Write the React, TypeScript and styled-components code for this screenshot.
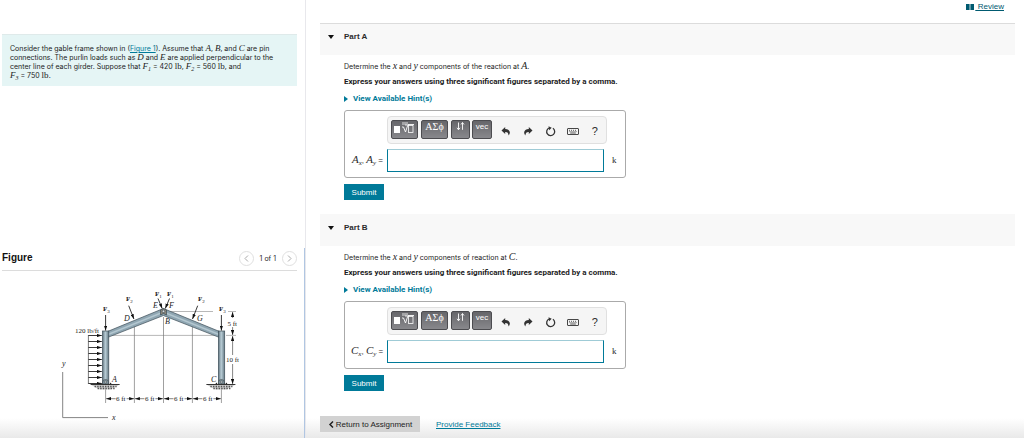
import React from 'react';
import styled, { createGlobalStyle } from 'styled-components';

const teal = '#007a99';

const GlobalStyle = createGlobalStyle`
  *, *::before, *::after { box-sizing: border-box; }
  body {
    margin: 0;
    background: #fff;
    color: #2b2b2b;
    font-family: "Liberation Sans", Arial, sans-serif;
    font-size: 8px;
    line-height: 9px;
  }
  button, input { font: inherit; color: inherit; margin: 0; padding: 0; }
`;

const Page = styled.div`
  display: grid;
  grid-template-columns: 306fr 718fr;
  min-height: 100vh;
  background: linear-gradient(to top, #e9e9e9, rgba(255, 255, 255, 0)) bottom / 100% 20px no-repeat;
`;

const Sidebar = styled.aside`
  display: flex;
  flex-direction: column;
  border-right: 1px solid #e8e8ec;
`;

const ProblemPane = styled.section`
  min-height: 248px;
  padding: 34px 8px 0 2px;
`;

const ProblemText = styled.p`
  margin: 0;
  padding: 9px 8px 6px;
  background: #e5f5f5;
  border-top: 1px solid #dfeaea;
  color: #1c1c1c;
  font-family: Inter, Arial, sans-serif;
  font-size: 7px;
`;

const Anchor = styled.a`
  color: ${teal};
  text-decoration: underline;
`;

const Var = styled.i`
  font-family: "Liberation Serif", serif;
  font-size: 9px;
  line-height: 1px;

  sub {
    font-size: 6px;
    line-height: 1px;
    vertical-align: -2px;
  }
`;

const Serif = styled.span`
  font-family: "Liberation Serif", serif;
  font-size: 9px;
  line-height: 1px;
`;

const FigurePane = styled.section`
  flex: 1;
  padding: 2px 7px 0 2px;
  border-right: 1px solid #b0c6e2;
`;

const FigureHeader = styled.header`
  display: flex;
  align-items: center;
  justify-content: space-between;
  height: 21px;
  border-bottom: 1px solid #dcdcdc;
`;

const FigureTitle = styled.h2`
  margin: 0 0 5px;
  font-size: 10px;
  line-height: 12px;
  color: #111;
`;

const Pager = styled.nav`
  display: flex;
  align-items: center;
  gap: 6px;
  padding-bottom: 4px;
  font-family: Inter, Arial, sans-serif;
  font-size: 7px;
`;

const RoundButton = styled.button`
  display: grid;
  place-items: center;
  width: 15px;
  height: 15px;
  border: 1px solid #e0e0e0;
  border-radius: 50%;
  background: #fff;
`;

const Diagram = styled.svg`
  display: block;
  width: 200px;
  height: 144px;
  margin: 13px 0 0 48px;
  font-family: "Liberation Serif", serif;
  font-size: 7px;
  fill: #222;
`;

const Main = styled.main`
  padding: 0 9px 6px 14px;
`;

const ReviewBar = styled.div`
  display: flex;
  justify-content: flex-end;
  height: 23px;
  padding: 2px 11px 0 0;
`;

const ReviewLink = styled.a`
  display: flex;
  align-items: center;
  gap: 2px;
  height: 9px;
  color: #005a70;
  white-space: pre;
`;

const PartSection = styled.section`
  margin-bottom: 14px;
`;

const PartHeader = styled.header<{ $ruled: boolean }>`
  display: flex;
  gap: 10px;
  height: 32px;
  padding: ${p => (p.$ruled ? '7px' : '8px')} 8px 0;
  background: #f8f8f8;
  border-top: ${p => (p.$ruled ? '1px solid #dcdcdc' : '0')};
`;

const Caret = styled.svg`
  width: 6px;
  height: 4px;
  margin-top: 4px;
`;

const PartTitle = styled.h3`
  margin: 0;
  font-size: 8px;
  line-height: 11px;
`;

const PartBody = styled.div`
  padding: 7px 24px 0;
`;

const Line = styled.p<{ $bold?: boolean }>`
  margin: 0 0 6px;
  font-family: ${p => (p.$bold ? 'Roboto' : 'Inter')}, Arial, sans-serif;
  font-size: ${p => (p.$bold ? 8 : 7)}px;
  font-weight: ${p => (p.$bold ? 700 : 400)};
  color: #1c1c1c;

  ${Var} { font-size: 10px; }
`;

const HintButton = styled.button`
  display: flex;
  align-items: center;
  gap: 5px;
  margin: 8px 0 7px;
  border: 0;
  background: none;
  color: ${teal};
  font-family: Roboto, Arial, sans-serif;
  font-weight: 700;
`;

const AnswerBox = styled.div`
  display: grid;
  grid-template-columns: 32px 217px auto;
  column-gap: 4px;
  row-gap: 5px;
  align-items: center;
  width: 282px;
  max-width: 100%;
  height: 68px;
  padding: 5px 6px;
  border: 1px solid #aaa;
  border-radius: 3px;
`;

const Toolbar = styled.div`
  grid-column: 2 / 4;
  display: flex;
  width: 220px;
  height: 28px;
  padding: 3px 0 3px 3px;
  border: 1px solid #e0e0e0;
  border-radius: 4px;
  background: #f5f5f5;
`;

const ToolButton = styled.button<{ $w: number }>`
  display: flex;
  flex: none;
  justify-content: center;
  width: ${p => p.$w}px;
  height: 19px;
  margin-right: ${p => (p.$w > 19 ? 3 : 2)}px;
  border: 1px solid #4c4c50;
  border-radius: 2px;
  background: linear-gradient(#66666a, #88888c);
  color: #fff;
  line-height: 11px;
`;

const Greek = styled.span`
  font-family: "Liberation Serif", serif;
  font-size: 10px;
  line-height: 12px;
`;

const IconButton = styled.button`
  display: grid;
  flex: 1;
  place-items: center;
  height: 22px;
  border: 0;
  background: none;
  font-size: 11px;
`;

const AnswerLabel = styled.label`
  text-align: right;
  white-space: nowrap;

  ${Var} { font-size: 11px; }
  sub { font-size: 7px; }
`;

const AnswerInput = styled.input`
  width: 100%;
  height: 23px;
  padding: 0 4px;
  border: 1px solid ${teal};
  border-top-color: #9fcbd6;
  background: #fff;
  outline: 0;
`;

const Unit = styled(Serif)`
  padding-left: 4px;
`;

const SubmitButton = styled.button`
  display: block;
  width: 40px;
  height: 16px;
  margin-top: 6px;
  border: 0;
  background: ${teal};
  color: #fff;
`;

const FooterBar = styled.footer`
  display: flex;
  align-items: center;
  gap: 16px;
  margin-top: 25px;
`;

const ReturnButton = styled.button`
  display: flex;
  align-items: center;
  justify-content: center;
  gap: 1px;
  width: 100px;
  height: 16px;
  border: 0;
  background: #d2d2d2;
  color: #222;
`;

function Chevron({ left, color, size = 7, weight = 1 }: { left?: boolean; color: string; size?: number; weight?: number }) {
  return (
    <svg width={size} height={size} viewBox="0 0 7 7" fill="none" stroke={color} strokeWidth={weight} aria-hidden="true">
      <path d={left ? 'M5 .5 2 3.5l3 3' : 'M2 .5l3 3-3 3'} />
    </svg>
  );
}

function Force({ x, y, n }: { x: number; y: number; n: number }) {
  return (
    <text x={x} y={y} fontWeight="700">
      F<tspan fontSize="5" dy="1.5" fontWeight="400">{n}</tspan>
    </text>
  );
}

function Ground({ x }: { x: number }) {
  return (
    <g>
      <path d={`M${x - 15} 384.5h29l-5 3-4 2h-11l-4-2z`} fill="#ccc" />
      <path d={`M${x - 15} 384.5h29`} stroke="#333" strokeWidth="1" />
      <path
        d={`M${x - 11} 386.5h22M${x - 8} 388.5h17`}
        stroke="#555"
        strokeWidth="1.3"
        strokeDasharray="1.4 1.2"
      />
      <path d={`M${x - 3} 384v-1.5a3 3 0 0 1 6 0V384z`} fill="#7f95a0" stroke="#333" strokeWidth=".5" />
      <circle cx={x} cy="382" r="1" fill="#dde7eb" stroke="#333" strokeWidth=".5" />
      <path d={`M${x - 6} 384l1-1.6 1 1.6zM${x + 4} 384l1-1.6 1 1.6z`} />
    </g>
  );
}

function FrameDiagram() {
  const loads = [335.5, 341.5, 347.5, 353.5, 359.5, 365.5, 371.5, 377.5, 383.5];
  return (
    <Diagram viewBox="50 284 200 144" role="img" aria-label="Gable frame with applied loads and dimensions">
      <defs>
        <marker id="tip" viewBox="0 0 6 4" refX="6" refY="2" markerWidth="5" markerHeight="3.6" markerUnits="userSpaceOnUse" orient="auto-start-reverse">
          <path d="M0 0l6 2-6 2z" fill="#111" />
        </marker>
        <linearGradient id="column">
          <stop offset="0" stopColor="#60737e" />
          <stop offset=".45" stopColor="#b9cdd6" />
          <stop offset="1" stopColor="#667b86" />
        </linearGradient>
      </defs>

      <g stroke="#999" strokeWidth=".7" fill="none">
        <path d="M109 335.4H218M226 335.4h10M167 311.5h46M228 311.5h8" />
        <path d="M134.4 322v81M163.5 317v86M192.4 322v81M105.6 389v14M221.4 389v14" stroke="#777" />
        <path d="M62.7 372v45.6H108" stroke="#777" strokeWidth=".9" />
      </g>

      <g stroke="#3d4e58" strokeWidth=".7">
        <path d="M108 331.3 163.4 308.5 219 331.3V337.3L163.4 315.5 108 337.3z" fill="#8fa6b2" />
        <path d="M108 334.5 163.4 312 219 334.5" fill="none" stroke="#b4c7d0" strokeWidth="1.4" />
        <rect x="102.5" y="331" width="6.3" height="53" fill="url(#column)" />
        <rect x="218.4" y="331" width="6.3" height="53" fill="url(#column)" />
        <path d="M160.5 310v5l3-1.5 3 1.5v-5l-3-1.5z" fill="#8a8478" />
        <circle cx="163.5" cy="311.3" r="1.3" fill="#ddd" />
      </g>

      <g stroke="#222" strokeWidth=".9" fill="none">
        {loads.map(y => (
          <path key={y} d={`M88.4 ${y}h13.4`} markerEnd="url(#tip)" />
        ))}
        <path d="M88.4 335v49" strokeWidth=".6" />
        <path d="M105.6 315v15.5" markerEnd="url(#tip)" />
        <path d="M221.4 315v15.5" markerEnd="url(#tip)" />
        <path d="M128.7 305.7l5.2 13.3" markerEnd="url(#tip)" />
        <path d="M197.7 305.7l-5.2 13.3" markerEnd="url(#tip)" />
        <path d="M158 298.5l4.2 10" markerEnd="url(#tip)" />
        <path d="M169.5 298.5l-4.2 10" markerEnd="url(#tip)" />
      </g>

      <g stroke="#333" strokeWidth=".6" fill="none">
        <path d="M232.6 318v-6" markerEnd="url(#tip)" />
        <path d="M232.6 327v8" markerEnd="url(#tip)" />
        <path d="M232.6 355v-19" markerEnd="url(#tip)" />
        <path d="M232.6 364v20" markerEnd="url(#tip)" />
        {[105.6, 134.4, 163.5, 192.4].map(x => (
          <g key={x}>
            <path d={`M${x + 10} 398.7H${x + 0.5}`} markerEnd="url(#tip)" />
            <path d={`M${x + 21} 398.7h7.5`} markerEnd="url(#tip)" />
          </g>
        ))}
      </g>

      <Ground x={105.6} />
      <Ground x={221.4} />

      <Force x={103} y={311} n={3} />
      <Force x={126} y={301} n={2} />
      <Force x={155} y={296} n={1} />
      <Force x={167} y={296} n={1} />
      <Force x={198} y={301} n={2} />
      <Force x={219} y={311} n={3} />
      <g fontStyle="italic" fontSize="8">
        <text x="124" y="321">D</text>
        <text x="153" y="308">E</text>
        <text x="169" y="308">F</text>
        <text x="165" y="324">B</text>
        <text x="197" y="321">G</text>
        <text x="112" y="382">A</text>
        <text x="211" y="382">C</text>
        <text x="62" y="366">y</text>
        <text x="112" y="420">x</text>
      </g>
      <text x="75" y="332.5">120 lb/ft</text>
      <text x="227.5" y="325.5">5 ft</text>
      <text x="226" y="362">10 ft</text>
      {[116, 145, 174, 203].map(x => (
        <text key={x} x={x} y="401">6 ft</text>
      ))}
    </Diagram>
  );
}

function FormulaIcon() {
  return (
    <svg width="21" height="15" viewBox="0 0 21 15" fill="none" stroke="#fff" aria-hidden="true">
      <rect x="0" y="5" width="6" height="7" fill="#fff" stroke="none" />
      <path d="M8 6h1.500l2 5L14 3.500h6" strokeWidth=".9" />
      <rect x="14.500" y="4.500" width="4.500" height="7" strokeWidth=".8" />
      <path d="M9 1v3M11 1v3h2V1" strokeWidth=".8" />
    </svg>
  );
}

function ArrowsIcon() {
  return (
    <svg width="9" height="10" viewBox="0 0 9 10" fill="none" stroke="#fff" strokeWidth=".9" aria-hidden="true">
      <path d="M2.5 1.5v7M1 6.8l1.5 2L4 6.8M6.5 8.8v-7M5 3.5l1.5-2 1.5 2" />
    </svg>
  );
}

function BentArrow({ flip }: { flip?: boolean }) {
  return (
    <svg width="10" height="9" viewBox="0 0 10 9" fill="#333" aria-hidden="true">
      <path
        d="M4.200 0 .5 3.500l3.700 3.500V5c2.200-.1 3.200 1 3.400 3.600C10.400 5.200 8.200 2.200 4.200 2.100z"
        transform={flip ? 'matrix(-1 0 0 1 10 0)' : undefined}
      />
    </svg>
  );
}

function ResetIcon() {
  return (
    <svg width="11" height="11" viewBox="0 0 11 11" fill="none" stroke="#333" strokeWidth="1.3" aria-hidden="true">
      <path d="M7.900 2.300A4 4 0 1 1 4 2" />
      <path d="M3.500 .2 6.700 1.800 4.200 4.200z" fill="#333" stroke="none" />
    </svg>
  );
}

function KeyboardIcon() {
  return (
    <svg width="12" height="8" viewBox="0 0 12 8" fill="none" stroke="#333" aria-hidden="true">
      <rect x=".5" y="1.500" width="11" height="6" rx=".5" strokeWidth=".9" />
      <path d="M2 3.300h8M2.500 4.600h7" strokeDasharray="1 1" strokeWidth=".8" />
      <path d="M3.200 6h5.600" strokeWidth=".8" />
    </svg>
  );
}

function Part({ letter, ruled, article, variable }: { letter: string; ruled: boolean; article: string; variable: string }) {
  const inputId = `answer-${letter}`;
  return (
    <PartSection>
      <PartHeader $ruled={ruled}>
        <Caret viewBox="0 0 6 4" aria-hidden="true"><path d="M0 0h6L3 4z" fill="#111" /></Caret>
        <PartTitle>Part {letter}</PartTitle>
      </PartHeader>
      <PartBody>
        <Line>
          Determine the <Var>x</Var> and <Var>y</Var> components of {article}reaction at <Var>{variable}</Var>.
        </Line>
        <Line $bold>Express your answers using three significant figures separated by a comma.</Line>
        <HintButton type="button">
          <svg width="4" height="6" viewBox="0 0 4 6" aria-hidden="true"><path d="M0 0l4 3-4 3z" fill={teal} /></svg>
          View Available Hint(s)
        </HintButton>
        <AnswerBox>
          <Toolbar role="toolbar" aria-label="Equation tools">
            <ToolButton type="button" $w={27} aria-label="Templates"><FormulaIcon /></ToolButton>
            <ToolButton type="button" $w={27} aria-label="Symbols"><Greek>ΑΣϕ</Greek></ToolButton>
            <ToolButton type="button" $w={19} aria-label="Subscripts"><ArrowsIcon /></ToolButton>
            <ToolButton type="button" $w={20}>vec</ToolButton>
            <IconButton type="button" aria-label="Undo"><BentArrow /></IconButton>
            <IconButton type="button" aria-label="Redo"><BentArrow flip /></IconButton>
            <IconButton type="button" aria-label="Reset"><ResetIcon /></IconButton>
            <IconButton type="button" aria-label="Keyboard shortcuts"><KeyboardIcon /></IconButton>
            <IconButton type="button">?</IconButton>
          </Toolbar>
          <AnswerLabel htmlFor={inputId}>
            <Var>{variable}<sub>x</sub></Var>, <Var>{variable}<sub>y</sub></Var> =
          </AnswerLabel>
          <AnswerInput id={inputId} type="text" />
          <Unit>k</Unit>
        </AnswerBox>
        <SubmitButton type="submit">Submit</SubmitButton>
      </PartBody>
    </PartSection>
  );
}

export default function App() {
  return (
    <>
      <GlobalStyle />
      <Page>
        <Sidebar>
          <ProblemPane>
            <ProblemText>
              Consider the gable frame shown in (<Anchor href="#figure">Figure 1</Anchor>). Assume that <Var>A</Var>, <Var>B</Var>, and <Var>C</Var> are pin<br />
              connections. The purlin loads such as <Var>D</Var> and <Var>E</Var> are applied perpendicular to the<br />
              center line of each girder. Suppose that <Var>F<sub>1</sub></Var> = 420 <Serif>lb</Serif>, <Var>F<sub>2</sub></Var> = 560 <Serif>lb</Serif>, and<br />
              <Var>F<sub>3</sub></Var> = 750 <Serif>lb</Serif>.
            </ProblemText>
          </ProblemPane>
          <FigurePane id="figure">
            <FigureHeader>
              <FigureTitle>Figure</FigureTitle>
              <Pager aria-label="Figures">
                <RoundButton type="button" aria-label="Previous figure"><Chevron left color="#aaa" /></RoundButton>
                <span>1 of 1</span>
                <RoundButton type="button" aria-label="Next figure"><Chevron color="#aaa" /></RoundButton>
              </Pager>
            </FigureHeader>
            <FrameDiagram />
          </FigurePane>
        </Sidebar>
        <Main>
          <ReviewBar>
            <ReviewLink href="#review">
              <svg width="8" height="6" viewBox="0 0 8 6" fill="#005a70" aria-hidden="true">
                <path d="M0 0h3.600v6H0zM4.400 0H8v6H4.400z" />
              </svg>
              <u>{' Review'}</u>
            </ReviewLink>
          </ReviewBar>
          <Part letter="A" ruled article="the " variable="A" />
          <Part letter="B" ruled={false} article="" variable="C" />
          <FooterBar>
            <ReturnButton type="button"><Chevron left color="#222" weight={1.5} />Return to Assignment</ReturnButton>
            <Anchor href="#feedback">Provide Feedback</Anchor>
          </FooterBar>
        </Main>
      </Page>
    </>
  );
}
